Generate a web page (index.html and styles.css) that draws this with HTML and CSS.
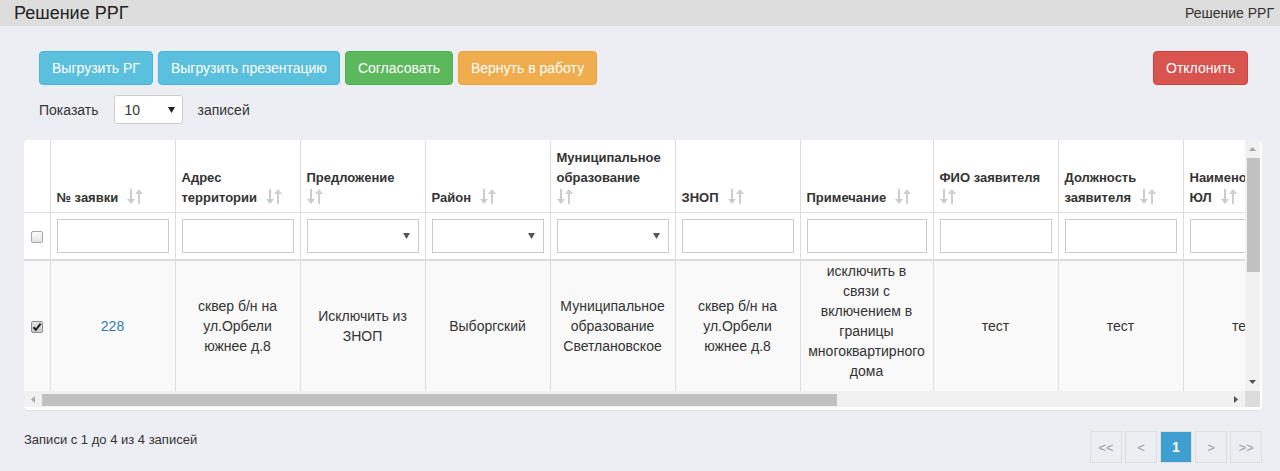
FILE: index.html
```html
<!DOCTYPE html>
<html lang="ru">
<head>
<meta charset="utf-8">
<title>Решение РРГ</title>
<link rel="stylesheet" href="styles.css">
</head>
<body>
<header class="topbar">
  <h1 class="page-title">Решение РРГ</h1>
  <div class="crumb">Решение РРГ</div>
</header>
<main class="main">
  <div class="toolbar">
    <div class="btn-group">
      <button class="btn btn-info">Выгрузить РГ</button>
      <button class="btn btn-info">Выгрузить презентацию</button>
      <button class="btn btn-success">Согласовать</button>
      <button class="btn btn-warning">Вернуть в работу</button>
    </div>
    <button class="btn btn-danger">Отклонить</button>
  </div>

  <div class="length">
    <span>Показать</span>
    <div class="select-box"><span>10</span><svg class="caret" width="7" height="6" viewBox="0 0 7 6"><path d="M0 0h7L3.5 6z" fill="#222"/></svg></div>
    <span>записей</span>
  </div>

  <div class="grid-card">
    <div class="grid-viewport">
      <table class="grid">
        <colgroup>
          <col class="c-check"><col class="c-std"><col class="c-std"><col class="c-std"><col class="c-std"><col class="c-std"><col class="c-std"><col class="c-note"><col class="c-std"><col class="c-std"><col class="c-std">
        </colgroup>
        <thead>
          <tr class="head-row">
            <th class="th-check"></th>
            <th>№ заявки<svg class="sort" width="16" height="15" viewBox="0 0 16 15"><path d="M3 0h2v10h3l-4 5-4-5h3z" fill="#cbcbcb"/><path d="M11 15h2V5h3l-4-5-4 5h3z" fill="#cfcfcf"/></svg></th>
            <th>Адрес<br>территории<svg class="sort" width="16" height="15" viewBox="0 0 16 15"><path d="M3 0h2v10h3l-4 5-4-5h3z" fill="#cbcbcb"/><path d="M11 15h2V5h3l-4-5-4 5h3z" fill="#cfcfcf"/></svg></th>
            <th>Предложение<br><svg class="sort solo" width="16" height="15" viewBox="0 0 16 15"><path d="M3 0h2v10h3l-4 5-4-5h3z" fill="#cbcbcb"/><path d="M11 15h2V5h3l-4-5-4 5h3z" fill="#cfcfcf"/></svg></th>
            <th>Район<svg class="sort" width="16" height="15" viewBox="0 0 16 15"><path d="M3 0h2v10h3l-4 5-4-5h3z" fill="#cbcbcb"/><path d="M11 15h2V5h3l-4-5-4 5h3z" fill="#cfcfcf"/></svg></th>
            <th>Муниципальное<br>образование<br><svg class="sort solo" width="16" height="15" viewBox="0 0 16 15"><path d="M3 0h2v10h3l-4 5-4-5h3z" fill="#cbcbcb"/><path d="M11 15h2V5h3l-4-5-4 5h3z" fill="#cfcfcf"/></svg></th>
            <th>ЗНОП<svg class="sort" width="16" height="15" viewBox="0 0 16 15"><path d="M3 0h2v10h3l-4 5-4-5h3z" fill="#cbcbcb"/><path d="M11 15h2V5h3l-4-5-4 5h3z" fill="#cfcfcf"/></svg></th>
            <th>Примечание<svg class="sort" width="16" height="15" viewBox="0 0 16 15"><path d="M3 0h2v10h3l-4 5-4-5h3z" fill="#cbcbcb"/><path d="M11 15h2V5h3l-4-5-4 5h3z" fill="#cfcfcf"/></svg></th>
            <th>ФИО заявителя<br><svg class="sort solo" width="16" height="15" viewBox="0 0 16 15"><path d="M3 0h2v10h3l-4 5-4-5h3z" fill="#cbcbcb"/><path d="M11 15h2V5h3l-4-5-4 5h3z" fill="#cfcfcf"/></svg></th>
            <th>Должность<br>заявителя<svg class="sort" width="16" height="15" viewBox="0 0 16 15"><path d="M3 0h2v10h3l-4 5-4-5h3z" fill="#cbcbcb"/><path d="M11 15h2V5h3l-4-5-4 5h3z" fill="#cfcfcf"/></svg></th>
            <th>Наименование<br>ЮЛ<svg class="sort" width="16" height="15" viewBox="0 0 16 15"><path d="M3 0h2v10h3l-4 5-4-5h3z" fill="#cbcbcb"/><path d="M11 15h2V5h3l-4-5-4 5h3z" fill="#cfcfcf"/></svg></th>
          </tr>
          <tr class="filter-row">
            <td class="td-check"><span class="cb"></span></td>
            <td><div class="f-input"></div></td>
            <td><div class="f-input"></div></td>
            <td><div class="f-input f-select"><svg width="7" height="6" viewBox="0 0 7 6"><path d="M0 0h7L3.5 6z" fill="#555"/></svg></div></td>
            <td><div class="f-input f-select"><svg width="7" height="6" viewBox="0 0 7 6"><path d="M0 0h7L3.5 6z" fill="#555"/></svg></div></td>
            <td><div class="f-input f-select"><svg width="7" height="6" viewBox="0 0 7 6"><path d="M0 0h7L3.5 6z" fill="#555"/></svg></div></td>
            <td><div class="f-input"></div></td>
            <td><div class="f-input"></div></td>
            <td><div class="f-input"></div></td>
            <td><div class="f-input"></div></td>
            <td><div class="f-input"></div></td>
          </tr>
        </thead>
        <tbody>
          <tr class="data-row">
            <td class="td-check"><span class="cb checked"><svg width="10" height="10" viewBox="0 0 10 10"><path d="M1.5 5.2l2.4 2.6L8.6 1.6" fill="none" stroke="#1e1e1e" stroke-width="2"/></svg></span></td>
            <td><a class="link" href="#">228</a></td>
            <td>сквер б/н на<br>ул.Орбели<br>южнее д.8</td>
            <td>Исключить из<br>ЗНОП</td>
            <td>Выборгский</td>
            <td>Муниципальное<br>образование<br>Светлановское</td>
            <td>сквер б/н на<br>ул.Орбели<br>южнее д.8</td>
            <td class="note">исключить в<br>связи с<br>включением в<br>границы<br>многоквартирного<br>дома</td>
            <td>тест</td>
            <td>тест</td>
            <td>тест</td>
          </tr>
        </tbody>
      </table>
    </div>
    <div class="vscroll">
      <div class="sb-btn"><svg width="7" height="4" viewBox="0 0 7 4"><path d="M0 4h7L3.5 0z" fill="#a8a8a8"/></svg></div>
      <div class="vthumb"></div>
      <div class="sb-fill"></div>
      <div class="sb-btn"><svg width="7" height="4" viewBox="0 0 7 4"><path d="M0 0h7L3.5 4z" fill="#505050"/></svg></div>
    </div>
    <div class="hscroll">
      <div class="sb-btn-h"><svg width="4" height="7" viewBox="0 0 4 7"><path d="M4 0v7L0 3.5z" fill="#a8a8a8"/></svg></div>
      <div class="hthumb"></div>
      <div class="sb-fill"></div>
      <div class="sb-btn-h"><svg width="4" height="7" viewBox="0 0 4 7"><path d="M0 0v7L4 3.5z" fill="#505050"/></svg></div>
    </div>
    <div class="corner"></div>
  </div>

  <div class="footer">
    <div class="info">Записи с 1 до 4 из 4 записей</div>
    <nav class="pager">
      <span class="page">&lt;&lt;</span>
      <span class="page">&lt;</span>
      <span class="page active">1</span>
      <span class="page">&gt;</span>
      <span class="page">&gt;&gt;</span>
    </nav>
  </div>
</main>
</body>
</html>
```
FILE: styles.css
```css
* { box-sizing: border-box; }
html, body { margin: 0; padding: 0; }
body {
  font-family: "Liberation Sans", Arial, sans-serif;
  font-size: 14px;
  color: #333;
  background: #eceef3;
  height: 471px;
  overflow: hidden;
}

.topbar {
  height: 26px;
  background: #dddddd;
  display: flex;
  align-items: center;
  justify-content: space-between;
  padding: 0 6px 0 14px;
}
.page-title {
  margin: 0;
  font-size: 18px;
  font-weight: normal;
  line-height: 26px;
  color: #222;
}
.crumb { font-size: 14px; color: #333; line-height: 26px; }

.main { padding: 25px 18px 0 24px; }

.toolbar {
  display: flex;
  justify-content: space-between;
  padding: 0 14px 0 15px;
}
.btn-group { display: flex; gap: 5px; }
.btn {
  height: 34px;
  padding: 0 12px;
  border: 1px solid transparent;
  border-radius: 4px;
  font: 14px "Liberation Sans", Arial, sans-serif;
  color: #fff;
  cursor: pointer;
}
.btn-info { background: #5bc0de; border-color: #46b8da; }
.btn-success { background: #5cb85c; border-color: #4cae4c; }
.btn-warning { background: #f0ad4e; border-color: #eea236; }
.btn-danger { background: #d9534f; border-color: #d43f3a; }

.length {
  display: flex;
  align-items: center;
  height: 29px;
  margin: 10px 0 0 15px;
}
.select-box {
  width: 69px;
  height: 29px;
  margin: 0 15px;
  background: #fff;
  border: 1px solid #ccc;
  border-radius: 3px;
  display: flex;
  align-items: center;
  justify-content: space-between;
  padding: 0 7px 0 10px;
}

.grid-card {
  margin-top: 16px;
  height: 270px;
  background: #fff;
  border-radius: 4px;
  box-shadow: 0 1px 1px rgba(0, 0, 0, 0.06);
  padding: 0 2px 3px 0;
  display: grid;
  grid-template-columns: 1221px 15px;
  grid-template-rows: 251px 16px;
}
.grid-viewport { overflow: hidden; border-top-left-radius: 4px; }

.grid {
  border-collapse: collapse;
  table-layout: fixed;
  width: 1284px;
}
.c-check { width: 26px; }
.c-std { width: 125px; }
.c-note { width: 133px; }

.grid th, .grid td { border-left: 1px solid #ddd; }
.grid th:first-child, .grid td:first-child { border-left: 0; }

.head-row th {
  height: 72px;
  padding: 7px 6px 4px 6px;
  vertical-align: bottom;
  text-align: left;
  font-size: 13px;
  font-weight: bold;
  line-height: 20px;
  color: #333;
  white-space: nowrap;
  overflow: hidden;
  border-bottom: 1px solid #ddd;
}
.sort { margin-left: 9px; vertical-align: -2px; }
.sort.solo { margin-left: 0; }

.filter-row td {
  height: 48px;
  padding: 6px;
  border-bottom: 2px solid #ddd;
  vertical-align: middle;
}
.grid .td-check { padding: 0; text-align: center; vertical-align: middle; }
.f-input {
  height: 34px;
  width: 100%;
  background: #fff;
  border: 1px solid #ccc;
}
.f-select {
  display: flex;
  align-items: center;
  justify-content: flex-end;
  padding-right: 8px;
}

.cb {
  display: inline-flex;
  align-items: center;
  justify-content: center;
  width: 12px;
  height: 12px;
  border: 1px solid #a6a6a6;
  border-radius: 2px;
  background: linear-gradient(#fdfdfd, #e2e2e2);
  vertical-align: middle;
}
.cb.checked { background: linear-gradient(#e4e4e4, #c9c9c9); border-color: #8f8f8f; }

.data-row td {
  height: 131px;
  padding: 5px 6px;
  background: #f9f9f9;
  text-align: center;
  vertical-align: middle;
  line-height: 20px;
  font-size: 14px;
  color: #333;
  border-bottom: 1px solid #ddd;
  white-space: nowrap;
  overflow: hidden;
}
.data-row td.note { padding: 0 6px 10px; }
.link { color: #337ab7; text-decoration: none; }

.vscroll {
  background: #f1f1f1;
  display: flex;
  flex-direction: column;
}
.sb-btn {
  height: 18px;
  flex: none;
  display: flex;
  align-items: center;
  justify-content: center;
}
.vthumb {
  height: 114px;
  flex: none;
  margin: 0 0 0 2px;
  background: #c1c1c1;
}
.sb-fill { flex: 1; }

.hscroll {
  background: #f1f1f1;
  display: flex;
}
.sb-btn-h {
  width: 18px;
  flex: none;
  display: flex;
  align-items: center;
  justify-content: center;
}
.hthumb {
  width: 795px;
  flex: none;
  margin: 3px 0 1px 0;
  background: #c1c1c1;
}
.corner { background: #dcdcdc; }

.footer {
  display: flex;
  justify-content: space-between;
  align-items: flex-start;
  margin-top: 21px;
}
.info { font-size: 13px; line-height: 18px; color: #333; }
.pager { display: flex; gap: 3px; }
.page {
  width: 32px;
  height: 32px;
  border: 1px solid #ddd;
  display: flex;
  align-items: center;
  justify-content: center;
  font-size: 13px;
  color: #9a9aa6;
}
.page.active {
  background: #3e9fd0;
  color: #fff;
  font-weight: bold;
  font-size: 14px;
}
```
